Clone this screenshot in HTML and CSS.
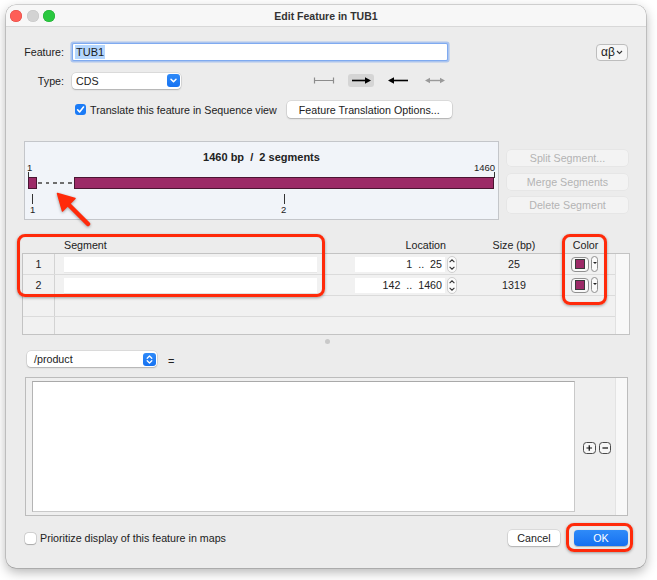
FILE: index.html
```html
<!DOCTYPE html>
<html>
<head>
<meta charset="utf-8">
<title>Edit Feature in TUB1</title>
<link rel="stylesheet" href="styles.css">
</head>
<body>
<div class="window">
  <div class="titlebar">
    <div class="lights"><span class="light l-red"></span><span class="light l-gray"></span><span class="light l-green"></span></div>
    <div class="title">Edit Feature in TUB1</div>
    <div></div>
  </div>
  <div class="content">
    <div class="row r-feature">
      <span class="lbl">Feature:</span>
      <div class="field"><span class="sel-text">TUB1</span></div>
      <div class="grow"></div>
      <div class="ab-btn">αβ<svg width="7" height="5" viewBox="0 0 7 5"><polyline points="1,1 3.5,3.5 6,1" fill="none" stroke="#333" stroke-width="1.1"/></svg></div>
    </div>
    <div class="row r-type">
      <span class="lbl">Type:</span>
      <div class="select type-select"><span>CDS</span><span class="blue-btn"><svg width="13" height="13" viewBox="0 0 13 13"><polyline points="4,5.2 6.5,7.8 9,5.2" fill="none" stroke="#fff" stroke-width="1.5" stroke-linecap="round" stroke-linejoin="round"/></svg></span></div>
      <div class="dirs">
        <span class="dir"><svg width="26" height="13" viewBox="0 0 26 13"><path d="M3.5 6.5H22.5M3.5 3.5V9.5M22.5 3.5V9.5" stroke="#8c8c8c" stroke-width="1.2" fill="none"/></svg></span>
        <span class="dir dir-on"><svg width="26" height="13" viewBox="0 0 26 13"><path d="M4 6.5H18" stroke="#000" stroke-width="1.6"/><polygon points="17,3.3 23,6.5 17,9.7" fill="#000"/></svg></span>
        <span class="dir"><svg width="26" height="13" viewBox="0 0 26 13"><path d="M8 6.5H23" stroke="#000" stroke-width="1.6"/><polygon points="3,6.5 9,3.3 9,9.7" fill="#000"/></svg></span>
        <span class="dir"><svg width="26" height="13" viewBox="0 0 26 13"><path d="M7 6.5H19" stroke="#9a9a9a" stroke-width="1.4"/><polygon points="3,6.5 8,3.8 8,9.2" fill="#9a9a9a"/><polygon points="23,6.5 18,3.8 18,9.2" fill="#9a9a9a"/></svg></span>
      </div>
    </div>
    <div class="row r-trans">
      <span class="check on"><svg width="11" height="11" viewBox="0 0 11 11"><polyline points="2.6,5.8 4.6,8 8.5,3" fill="none" stroke="#fff" stroke-width="1.6" stroke-linecap="round" stroke-linejoin="round"/></svg></span>
      <span class="check-text">Translate this feature in Sequence view</span>
      <span class="btn opt-btn">Feature Translation Options...</span>
    </div>
    <div class="map-row">
      <div class="map">
        <div class="map-title">1460 bp  /  2 segments</div>
        <span class="num-lbl top-1">1</span>
        <span class="tick t-top1"></span>
        <span class="bar bar-small"></span>
        <span class="gap-dash"></span>
        <span class="bar bar-big"></span>
        <span class="num-lbl top-1460">1460</span>
        <span class="tick t-top2"></span>
        <span class="tick t-low1"></span>
        <span class="tick t-low2"></span>
        <span class="num-lbl low-1">1</span>
        <span class="num-lbl low-2">2</span>
      </div>
      <div class="seg-btns">
        <span class="seg-btn">Split Segment...</span>
        <span class="seg-btn">Merge Segments</span>
        <span class="seg-btn">Delete Segment</span>
      </div>
    </div>
    <div class="tbl-head">
      <span></span><span class="h-seg">Segment</span><span class="h-loc">Location</span><span class="h-size">Size (bp)</span><span class="h-color">Color</span><span></span>
    </div>
    <div class="tbl-body">
      <div class="rows">
        <div class="trow">
          <div class="c-num">1</div>
          <div class="c-seg"><div class="cell-input"></div></div>
          <div class="c-loc"><div class="loc-input">1  ..  25</div><svg class="stepper" width="10" height="17" viewBox="0 0 10 17"><rect x="0.5" y="0.5" width="9" height="16" rx="4.5" fill="#fbfbfb" stroke="#c4c4c4" stroke-width="0.8"/><polyline points="2.6,6.2 5,3.8 7.4,6.2" fill="none" stroke="#333" stroke-width="1.1"/><polyline points="2.6,10.8 5,13.2 7.4,10.8" fill="none" stroke="#333" stroke-width="1.1"/></svg></div>
          <div class="c-size">25</div>
          <div class="c-color"><span class="well"><span class="swatch"></span></span><span class="well-dd"></span></div>
        </div>
        <div class="trow">
          <div class="c-num">2</div>
          <div class="c-seg"><div class="cell-input"></div></div>
          <div class="c-loc"><div class="loc-input">142  ..  1460</div><svg class="stepper" width="10" height="17" viewBox="0 0 10 17"><rect x="0.5" y="0.5" width="9" height="16" rx="4.5" fill="#fbfbfb" stroke="#c4c4c4" stroke-width="0.8"/><polyline points="2.6,6.2 5,3.8 7.4,6.2" fill="none" stroke="#333" stroke-width="1.1"/><polyline points="2.6,10.8 5,13.2 7.4,10.8" fill="none" stroke="#333" stroke-width="1.1"/></svg></div>
          <div class="c-size">1319</div>
          <div class="c-color"><span class="well"><span class="swatch"></span></span><span class="well-dd"></span></div>
        </div>
        <div class="trow"><div class="c-num"></div></div>
        <div class="trow last"><div class="c-num"></div></div>
      </div>
      <div class="vscroll"></div>
    </div>
    <div class="handle"><span class="dot"></span></div>
    <div class="row r-qual">
      <div class="select qual-select"><span>/product</span><span class="blue-btn"><svg width="13" height="13" viewBox="0 0 13 13"><polyline points="4.2,5.2 6.5,3 8.8,5.2" fill="none" stroke="#fff" stroke-width="1.3" stroke-linecap="round" stroke-linejoin="round"/><polyline points="4.2,7.8 6.5,10 8.8,7.8" fill="none" stroke="#fff" stroke-width="1.3" stroke-linecap="round" stroke-linejoin="round"/></svg></span></div>
      <span class="eq">=</span>
    </div>
    <div class="qual-box">
      <div class="qual-text"></div>
      <div class="pm">
        <span class="pm-btn"><svg width="12" height="12" viewBox="0 0 12 12"><path d="M6 2.8V9.2M2.8 6H9.2" stroke="#111" stroke-width="1.4"/></svg></span>
        <span class="pm-btn"><svg width="12" height="12" viewBox="0 0 12 12"><path d="M2.8 6H9.2" stroke="#111" stroke-width="1.4"/></svg></span>
      </div>
      <div class="qual-scroll"></div>
    </div>
    <div class="row r-bottom">
      <span class="check off"></span>
      <span class="check-text">Prioritize display of this feature in maps</span>
      <div class="grow"></div>
      <span class="btn cancel-btn">Cancel</span>
      <span class="btn ok-btn">OK</span>
    </div>
  </div>

  <div class="note note-seg"></div>
  <div class="note note-color"></div>
  <div class="note note-ok"></div>
  <svg class="note-arrow" width="45" height="40" viewBox="0 0 45 40">
    <path d="M16 14L38 36" stroke="#ff2a0a" stroke-width="4.5" stroke-linecap="round"/>
    <polygon points="7.5,5.5 25,10.5 12.5,23" fill="#ff2a0a" stroke="#ff2a0a" stroke-width="1.5" stroke-linejoin="round"/>
  </svg>
</div>
</body>
</html>
```

FILE: styles.css
```css
* { box-sizing: border-box; }
html, body { margin: 0; padding: 0; }
body {
  width: 657px;
  height: 580px;
  overflow: hidden;
  background: #ffffff;
  font-family: "Liberation Sans", Arial, sans-serif;
  font-size: 10.7px;
  color: #222222;
}
.window {
  position: relative;
  margin: 5px 0 0 6px;
  width: 640px;
  height: 563px;
  background: #ececec;
  border-radius: 10px;
  box-shadow: 0 0 0 0.5px rgba(0,0,0,0.28), 0 4px 12px rgba(0,0,0,0.3);
}
.titlebar {
  height: 22px;
  display: grid;
  grid-template-columns: 1fr auto 1fr;
  align-items: center;
  background: #f7f7f7;
  border-bottom: 1px solid #d8d8d8;
  border-radius: 10px 10px 0 0;
}
.lights { display: flex; gap: 4.5px; padding-left: 4px; }
.light { width: 12px; height: 12px; border-radius: 50%; display: block; }
.l-red { background: #fe5f57; box-shadow: inset 0 0 0 0.5px #e14640; }
.l-gray { background: #d3d3d3; box-shadow: inset 0 0 0 0.5px #c4c4c4; }
.l-green { background: #2ac840; box-shadow: inset 0 0 0 0.5px #1eab31; }
.title { font-weight: bold; font-size: 10.5px; color: #333; }

.content { padding: 0 16px; }
.row { display: flex; align-items: center; }
.grow { flex: 1; }
.lbl { width: 42px; flex: none; text-align: right; }

.r-feature { margin-top: 15px; height: 20px; }
.field {
  margin-left: 9px;
  width: 374px;
  height: 16px;
  background: #fff;
  border-radius: 1px;
  box-shadow: 0 0 0 1px #7faaf0, 0 0 0 2.6px rgba(120,165,240,0.55);
  display: flex;
  align-items: center;
  padding-left: 2px;
}
.sel-text { background: #b4d6fe; font-size: 11px; line-height: 14px; padding: 0 1px; color: #1a1a1a; }
.ab-btn {
  margin-right: 2px;
  width: 32px;
  height: 17px;
  border: 1px solid #bdbdbd;
  border-radius: 4px;
  background: #f6f6f6;
  font-size: 12px;
  display: flex;
  align-items: center;
  justify-content: center;
  gap: 1px;
}

.r-type { margin-top: 10px; height: 17px; }
.select {
  height: 16px;
  background: #fff;
  border-radius: 4px;
  box-shadow: 0 0 0 0.5px rgba(0,0,0,0.14), 0 1px 1.5px rgba(0,0,0,0.2);
  display: flex;
  align-items: center;
  justify-content: space-between;
}
.type-select { margin-left: 8px; width: 109px; padding: 0 1.5px 0 4px; }
.blue-btn {
  width: 13px;
  height: 13px;
  border-radius: 3px;
  background: linear-gradient(#2f8af8, #1672f2);
  display: flex;
}
.dirs { margin-left: 130px; display: flex; gap: 11px; }
.dir { width: 26px; height: 13px; display: flex; border-radius: 3px; }
.dir-on { background: #d5d5d5; }

.r-trans { margin-top: 11px; height: 19px; }
.check { width: 11px; height: 11px; border-radius: 3px; display: flex; flex: none; }
.check.on { margin-left: 53px; background: #1b7bf6; }
.check.off { margin-left: 3px; background: #fff; box-shadow: 0 0 0 0.5px rgba(0,0,0,0.2), 0 0.5px 1px rgba(0,0,0,0.2); }
.check-text { margin-left: 4px; }
.btn {
  height: 17px;
  display: flex;
  align-items: center;
  justify-content: center;
  background: #fff;
  border-radius: 4px;
  box-shadow: 0 0 0 0.5px rgba(0,0,0,0.14), 0 1px 1.5px rgba(0,0,0,0.2);
}
.opt-btn { margin-left: 10px; width: 165px; }

.map-row { display: flex; margin-top: 22px; }
.map {
  position: relative;
  margin-left: 2px;
  width: 475px;
  height: 79px;
  background: #f1f4f9;
  border: 1px solid #c4c6ca;
}
.map-title { position: absolute; left: 0; right: 0; top: 9px; text-align: center; font-weight: bold; font-size: 11px; white-space: pre; }
.num-lbl { position: absolute; font-size: 9.5px; line-height: 10px; color: #222; }
.top-1 { left: 2px; top: 21px; }
.top-1460 { left: 449px; top: 21px; }
.low-1 { left: 5px; top: 63px; }
.low-2 { left: 256px; top: 63px; }
.tick { position: absolute; width: 1px; background: #333; }
.t-top1 { left: 3px; top: 30px; height: 6px; }
.t-top2 { left: 469px; top: 30px; height: 6px; }
.t-low1 { left: 7px; top: 52px; height: 10px; }
.t-low2 { left: 259px; top: 52px; height: 10px; }
.bar { position: absolute; top: 35px; height: 12px; background: #9c2a67; border: 1px solid #4a1532; }
.bar-small { left: 3px; width: 9px; }
.bar-big { left: 49px; width: 420px; }
.gap-dash {
  position: absolute;
  left: 13px;
  top: 40px;
  width: 34px;
  height: 2px;
  background: repeating-linear-gradient(90deg, #6e6e6e 0 4px, transparent 4px 7.5px);
}
.seg-btns { margin-left: 8px; width: 121px; display: flex; flex-direction: column; gap: 7.5px; padding-top: 9px; }
.seg-btn {
  height: 16px;
  line-height: 16px;
  text-align: center;
  background: #f3f3f3;
  border-radius: 4px;
  color: #b3b3b3;
  box-shadow: 0 0 0 0.5px rgba(0,0,0,0.05);
}

.tbl-head {
  margin-top: 17px;
  height: 16px;
  display: grid;
  grid-template-columns: 33px 285px 130px 88px 58px 14px;
  align-items: center;
}
.h-seg { padding-left: 9px; }
.h-loc { text-align: right; padding-right: 24px; }
.h-size { text-align: center; }
.h-color { text-align: center; padding-right: 3px; }

.tbl-body {
  height: 82px;
  border: 1px solid #c3c3c3;
  background: #f1f1f1;
  display: flex;
}
.rows { flex: 1; display: flex; flex-direction: column; }
.trow {
  height: 21px;
  flex: none;
  display: grid;
  grid-template-columns: 32px 285px 130px 88px 57px;
  align-items: center;
  border-bottom: 1px solid #dbdbdb;
}
.trow.last { flex: 1; border-bottom: none; }
.c-num { height: 100%; display: flex; align-items: center; justify-content: center; border-right: 1px solid #d3d3d3; }
.c-seg { padding-left: 9px; }
.cell-input { width: 253px; height: 15px; background: #fff; box-shadow: 0 0.5px 0 rgba(0,0,0,0.08); }
.c-loc { display: flex; align-items: center; padding-left: 15px; }
.loc-input {
  width: 90px;
  height: 15px;
  line-height: 15px;
  background: #fff;
  text-align: right;
  padding-right: 3px;
  white-space: pre;
  font-size: 10.7px;
}
.stepper { margin-left: 2px; display: block; }
.c-size { text-align: center; }
.c-color { display: flex; align-items: center; padding-left: 13px; gap: 2px; }
.well {
  width: 18px;
  height: 15px;
  border: 1px solid #8f8f8f;
  border-radius: 4px;
  background: #f9f9f9;
  display: flex;
  align-items: center;
  justify-content: center;
}
.swatch { width: 10px; height: 10px; background: #9c2a67; border: 1px solid #3a3a3a; }
.well-dd {
  position: relative;
  width: 7px;
  height: 16px;
  border: 1px solid #8f8f8f;
  border-radius: 3.5px;
  background: #fbfbfb;
}
.well-dd::after {
  content: "";
  position: absolute;
  left: 1px;
  top: 5px;
  border-left: 2px solid transparent;
  border-right: 2px solid transparent;
  border-top: 2.5px solid #222;
}
.vscroll { width: 14px; flex: none; background: #f8f8f8; border-left: 1px solid #e1e1e1; }

.handle { height: 16px; display: flex; justify-content: center; padding-top: 4px; padding-left: 2px; }
.dot { width: 5px; height: 5px; border-radius: 50%; background: #c9c9c9; }

.r-qual { height: 16px; }
.qual-select { margin-left: 5px; width: 130px; padding: 0 1.5px 0 7px; }
.eq { margin-left: 11px; padding-top: 4px; font-size: 11px; }

.qual-box {
  margin-top: 10px;
  margin-left: 3px;
  width: 603px;
  height: 139px;
  border: 1px solid #bcbcbc;
  background: #efefef;
  display: flex;
}
.qual-text {
  margin: 3px 0 3px 6px;
  width: 543px;
  background: #fff;
  border: 1px solid #c9c9c9;
  border-top-color: #a9a9a9;
  border-left-color: #b4b4b4;
}
.pm { width: 40px; display: flex; align-items: center; padding-left: 8px; padding-top: 3px; gap: 3px; }
.pm-btn {
  width: 12.5px;
  height: 12.5px;
  border: 1px solid #4a4a4a;
  border-radius: 3.5px;
  background: #f6f6f6;
  display: flex;
  align-items: center;
  justify-content: center;
}
.qual-scroll { width: 12px; background: #f8f8f8; border-left: 1px solid #e3e3e3; }

.r-bottom { margin-top: 13px; height: 18px; }
.cancel-btn { width: 52px; height: 16px; }
.ok-btn {
  margin-left: 14px;
  margin-right: 2px;
  width: 54px;
  height: 16px;
  color: #fff;
  background: linear-gradient(#2f8bf9, #1570f1);
  box-shadow: 0 0.5px 1px rgba(0,0,0,0.25);
}

.note {
  position: absolute;
  border: 3px solid #ff2a0a;
  border-radius: 8px;
  box-shadow: 0 1px 3px rgba(0,0,0,0.35), inset 0 0 1px rgba(0,0,0,0.2);
}
.note-seg { left: 11px; top: 229px; width: 308px; height: 63px; }
.note-color { left: 556px; top: 229px; width: 45px; height: 71px; }
.note-ok { left: 560px; top: 518px; width: 67px; height: 29px; }
.note-arrow { position: absolute; left: 44px; top: 183px; filter: drop-shadow(0 1px 1.5px rgba(0,0,0,0.35)); }
```
